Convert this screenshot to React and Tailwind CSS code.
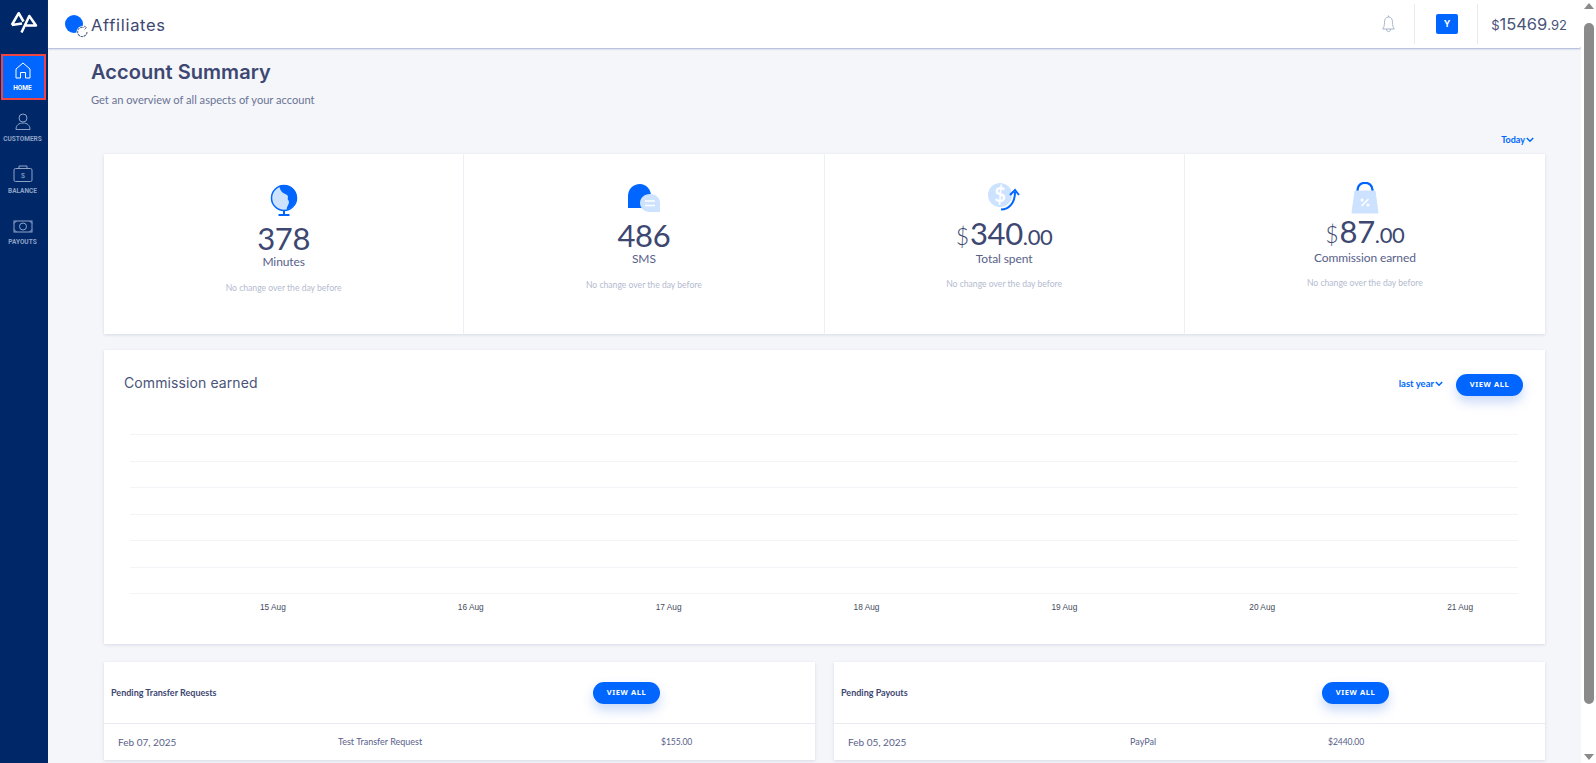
const body = { fontFamily: '"Lato", "Noto Sans", sans-serif' };
const Logo = () => (
  <svg width="28" height="23" viewBox="0 0 28 23" fill="none" stroke="white" strokeWidth="2.5">
    <path d="M1.8 14 L8.7 2.2 L13.5 10.5 M1.8 14 L12 12.5" strokeLinejoin="round" />
    <path d="M11.5 21.5 L19.3 5 L26 14.5 H15" strokeLinejoin="round" />
  </svg>
);
const AffIcon = () => (
  <svg width="24" height="24" viewBox="0 0 24 24" fill="none">
    <circle cx="9" cy="9" r="9" fill="#0066ff" />
    <circle cx="17.5" cy="17" r="6" fill="white" />
    <path d="M22 17 A4.7 4.7 0 1 1 19 12.5" stroke="#5a6a90" strokeWidth="1.1" strokeDasharray="2.5 0.7" />
    <path d="M19 11 L21.5 12.5 L19.5 14.5" stroke="#5a6a90" strokeWidth="0.9" />
  </svg>
);
const HomeI = () => (
  <svg width="16" height="17" viewBox="0 0 16 17" fill="none" stroke="white" strokeWidth="1">
    <path d="M1 7 L8 1 L15 7 V16 H10.5 V10.5 H5.5 V16 H1 Z" strokeLinejoin="round" />
  </svg>
);
const UserI = () => (
  <svg width="16" height="17" viewBox="0 0 16 17" fill="none" stroke="#8fa2c6" strokeWidth="1">
    <circle cx="8" cy="5" r="4" />
    <path d="M1 16.5 C1 12 4 10 8 10 C12 10 15 12 15 16.5 Z" />
  </svg>
);
const BagI = () => (
  <svg width="20" height="17" viewBox="0 0 20 17" fill="none" stroke="#8fa2c6" strokeWidth="1">
    <rect x="1" y="3.5" width="18" height="13" rx="1.5" />
    <path d="M6 3.5 V1 H14 V3.5" />
    <text x="10" y="13" fontSize="7" textAnchor="middle" fill="#8fa2c6" stroke="none" fontFamily="Liberation Sans, sans-serif">$</text>
  </svg>
);
const CashI = () => (
  <svg width="20" height="13" viewBox="0 0 20 13" fill="none" stroke="#8fa2c6" strokeWidth="1">
    <rect x="1" y="1" width="18" height="11" />
    <ellipse cx="10" cy="6.5" rx="3.5" ry="3.5" />
    <path d="M1 3.5 L3.5 1 M16.5 1 L19 3.5 M1 9.5 L3.5 12 M16.5 12 L19 9.5" />
  </svg>
);
const BellI = () => (
  <svg width="13" height="18" viewBox="0 0 13 18" fill="none" stroke="#a9b4c9" strokeWidth="1">
    <path d="M6.5 2 C3.5 2 2.5 4.5 2.5 7.5 C2.5 10.5 1.8 12.5 0.7 14 H12.3 C11.2 12.5 10.5 10.5 10.5 7.5 C10.5 4.5 9.5 2 6.5 2 Z" />
    <path d="M6.5 0.5 V2 M4.5 14 C4.5 17.5 8.5 17.5 8.5 14" />
  </svg>
);
const Chevron = () => (
  <svg width="8" height="6" viewBox="0 0 8 6" fill="none" stroke="#0066ff" strokeWidth="1.5"><path d="M0.8 1 L4 4.2 L7.2 1" /></svg>
);
const NavItem = ({ icon, label, cls }) => (
  <div className={`flex w-full flex-col items-center ${cls}`}>
    {icon}
    <span className="mt-[5px] text-[6.5px] leading-[8px] font-bold text-[#8fa2c6]" style={{ fontFamily: '"Roboto", sans-serif' }}>{label}</span>
  </div>
);
const Globe = () => (
  <svg width="28" height="32" viewBox="0 0 28 32">
    <circle cx="14" cy="14" r="12.5" fill="#cce2ff" stroke="#0066ff" strokeWidth="1.5" />
    <path d="M9 2 C16 -1 27 3 26.5 14 C26 20 22 24 17 25.5 C16 23 19 21 19 18 C19 16 17 16 18 13 C18 10 14 10 12 8 C10 6 10 4 9 2 Z" fill="#0066ff" />
    <path d="M14 26 V30 M8.5 31 H19.5" stroke="#0066ff" strokeWidth="2" />
  </svg>
);
const Sms = () => (
  <svg width="32" height="28" viewBox="0 0 32 28">
    <path d="M0 24 V12 C0 5 5 0 12 0 C18 0 23 5 23 12 V24 Z" fill="#0066ff" />
    <path d="M22 10 C28 10 32 14 32 19 V27 Q32 28 31 28 H22 C16 28 12 24 12 19 C12 14 16 10 22 10 Z" fill="#cce2ff" />
    <path d="M17 17 H27 M17 21.5 H27" stroke="white" strokeWidth="1.6" />
  </svg>
);
const Dollar = () => (
  <svg width="32" height="28" viewBox="0 0 32 28">
    <circle cx="12" cy="12" r="12" fill="#cce2ff" />
    <text x="12" y="19" textAnchor="middle" fontSize="20" fontWeight="700" fill="white" fontFamily="Lato, sans-serif">$</text>
    <path d="M13 26.5 C21 26.5 27 20 27 9" fill="none" stroke="#0066ff" strokeWidth="2" />
    <path d="M22 12 L27 7 L31 12" fill="none" stroke="#0066ff" strokeWidth="2" />
  </svg>
);
const Bag = () => (
  <svg width="28" height="32" viewBox="0 0 28 32">
    <path d="M6.5 9 V8 C6.5 -1.5 21.5 -1.5 21.5 8 V9" fill="none" stroke="#0066ff" strokeWidth="2.4" />
    <path d="M4 9 H24 L27 31 H1 Z" fill="#cce2ff" strokeLinejoin="round" stroke="#cce2ff" />
    <path d="M10.5 24 L17.5 17" stroke="white" strokeWidth="1.6" />
    <circle cx="11" cy="18" r="1.5" fill="white" /><circle cx="17" cy="23" r="1.5" fill="white" />
  </svg>
);
const Stat = ({ icon, pt, mt, num, cents, label, lt, nt, last }) => (
  <div className={`flex flex-col items-center ${pt} ${last ? '' : 'border-r border-[#eef0f5]'}`}>
    <div className="flex h-[32px] items-start justify-center">{icon}</div>
    <div className={`flex items-baseline leading-[28px] text-[#3d4771] ${mt}`}>
      {cents && <span className="mr-[1px] text-[23px] font-light">$</span>}
      <span className="text-[31px] tracking-[-0.4px]">{num}</span>
      {cents && <span className="text-[22px] tracking-[-0.3px]">.{cents}</span>}
    </div>
    <div className={`text-[12px] leading-[16px] tracking-[-0.1px] text-[#58618a] ${lt}`}>{label}</div>
    <div className={`text-[8.6px] leading-[12px] text-[#b4bbcf] ${nt}`}>No change over the day before</div>
  </div>
);
const Btn = ({ cls }) => (
  <div className={`flex h-[22px] w-[67px] items-center justify-center rounded-full bg-[#0066ff] text-[7.5px] font-bold tracking-[0.6px] text-white shadow-[0_6px_12px_rgba(0,80,220,0.22)] ${cls}`} style={{ fontFamily: '"Noto Sans", sans-serif' }}>VIEW ALL</div>
);
const Lower = ({ title, date, mid, amt, gap1, gap2, btn }) => (
  <div className="flex flex-col bg-white shadow-[0_1px_3px_rgba(60,70,120,0.15)]">
    <div className="relative flex h-[62px] items-center border-b border-[#e8eaf0] pl-[7px] text-[9px] font-bold text-[#3d4771]">
      <span>{title}</span>
      <Btn cls={`absolute top-[20px] ${btn}`} />
    </div>
    <div className="flex h-[36px] items-center pl-[14px] text-[#58618a]">
      <span className={`text-[10px] ${gap1}`}>{date}</span>
      <span className={`text-[9px] ${gap2}`}>{mid}</span>
      <span className="text-[8.6px] tracking-[-0.1px]">{amt}</span>
    </div>
  </div>
);
export default function App() {
  return (
    <div className="flex h-screen w-full overflow-hidden bg-[#f4f6fa]" style={body}>
      <aside className="flex w-[48px] shrink-0 flex-col items-center bg-[#002868] pr-[3px]">
        <div className="ml-[3px] mt-[11px] h-[23px]"><Logo /></div>
        <div className="ml-[1px] mt-[20px] flex h-[46px] w-[45px] flex-col items-center justify-center self-start border-2 border-[#ef4444] bg-[#0066ff] pr-[2px]">
          <HomeI />
          <span className="mt-[5px] text-[6.5px] leading-[8px] font-bold text-white" style={{ fontFamily: '"Roboto", sans-serif' }}>HOME</span>
        </div>
        <NavItem icon={<UserI />} label="CUSTOMERS" cls="mt-[13px]" />
        <NavItem icon={<BagI />} label="BALANCE" cls="mt-[22px]" />
        <NavItem icon={<CashI />} label="PAYOUTS" cls="mt-[25px]" />
      </aside>
      <main className="flex min-w-0 flex-1 flex-col">
        <header className="flex h-[48px] shrink-0 items-center rounded-br-[2px] bg-white pl-[17px] shadow-[0_1px_2px_rgba(70,90,160,0.45)]">
          <div className="mt-[6px] h-[24px] w-[24px]"><AffIcon /></div>
          <span className="ml-[2px] mt-[3px] text-[16.5px] tracking-[0.7px] text-[#3d4771]" style={{ fontFamily: '"Inter", sans-serif' }}>Affiliates</span>
          <div className="ml-auto flex h-[40px] items-center">
            <BellI />
            <div className="ml-[19px] h-[40px] w-px bg-[#e8eaf0]" />
            <div className="ml-[21px] flex h-[20px] w-[22px] items-center justify-center rounded-[2px] bg-[#0066ff] text-[9px] font-bold text-white" style={{ fontFamily: '"Inter", sans-serif' }}>Y</div>
            <div className="ml-[19px] h-[40px] w-px bg-[#e8eaf0]" />
            <div className="ml-[13px] mr-[14px] flex items-baseline text-[#4a5479]" style={{ fontFamily: '"Inter", sans-serif' }}>
              <span className="text-[13px]">$</span><span className="text-[16.5px]">15469</span><span className="text-[13px]">.92</span>
            </div>
          </div>
        </header>
        <div className="flex min-h-0 flex-1 flex-col pl-[43px]">
          <h1 className="mt-[12px] text-[20px] leading-[24px] font-semibold tracking-[0.05px] text-[#3d4771]" style={{ fontFamily: '"Inter", sans-serif' }}>Account Summary</h1>
          <p className="mt-[8px] text-[11.1px] leading-[16px] text-[#6b7394]">Get an overview of all aspects of your account</p>
          <div className="mr-[47px] mt-[26px] flex items-center justify-end gap-[1px] text-[9px] leading-[12px] font-bold text-[#0066ff]">Today<Chevron /></div>
          <div className="ml-[13px] mr-[36px] flex flex-col">
            <section className="mt-[8px] grid h-[180px] grid-cols-4 bg-white shadow-[0_1px_3px_rgba(60,70,120,0.15)]">
              <Stat icon={<Globe />} pt="pt-[30px]" mt="mt-[8px]" num="378" label="Minutes" lt="mt-[2px]" nt="mt-[12px]" />
              <Stat icon={<Sms />} pt="pt-[30px]" mt="mt-[5px]" num="486" label="SMS" lt="mt-[2px]" nt="mt-[12px]" />
              <Stat icon={<Dollar />} pt="pt-[29px]" mt="mt-[4px]" num="340" cents="00" label="Total spent" lt="mt-[0px]" nt="mt-[11px]" />
              <Stat icon={<Bag />} pt="pt-[28px]" mt="mt-[3px]" num="87" cents="00" label="Commission earned" lt="mt-[1px]" nt="mt-[11px]" last />
            </section>
            <section className="mt-[16px] flex h-[294px] flex-col bg-white px-[20px] shadow-[0_1px_3px_rgba(60,70,120,0.15)]">
              <div className="flex h-[60px] items-center">
                <h2 className="mt-[4px] text-[14px] tracking-[0.1px] text-[#4a5479]" style={{ fontFamily: '"Inter", sans-serif' }}>Commission earned</h2>
                <div className="ml-auto mt-[8px] flex items-center gap-[1px] text-[9.5px] font-bold text-[#0066ff]">last year<Chevron /></div>
                <Btn cls="ml-[13px] mr-[2px] mt-[9px]" />
              </div>
              <div className="ml-[6px] mr-[7px] mt-[24px] flex flex-col gap-[25.5px]">
                {[0, 1, 2, 3, 4, 5, 6].map((i) => <div key={i} className="h-px bg-[#f3f4f7]" />)}
              </div>
              <div className="ml-[136px] mr-[52px] mt-[8px] flex justify-between text-[8.3px] leading-[10px] text-[#444c5e]" style={{ fontFamily: '"Liberation Sans", sans-serif' }}>
                {['15 Aug', '16 Aug', '17 Aug', '18 Aug', '19 Aug', '20 Aug', '21 Aug'].map((d) => <span key={d}>{d}</span>)}
              </div>
            </section>
            <section className="mt-[18px] grid grid-cols-2 gap-[19px]">
              <Lower title="Pending Transfer Requests" date="Feb 07, 2025" mid="Test Transfer Request" amt="$155.00" gap1="w-[220px]" gap2="w-[323px]" btn="left-[489px]" />
              <Lower title="Pending Payouts" date="Feb 05, 2025" mid="PayPal" amt="$2440.00" gap1="w-[282px]" gap2="w-[198px]" btn="left-[488px]" />
            </section>
          </div>
        </div>
      </main>
      <div className="flex w-[15px] shrink-0 flex-col items-center bg-white">
        <div className="mt-[3px] h-0 w-0 border-x-[5px] border-b-[6px] border-x-transparent border-b-[#8a8a8a]" />
        <div className="mt-[14px] h-[681px] w-[10px] rounded-[5px] bg-[#8a8a8a]" />
        <div className="mb-[3px] mt-auto h-0 w-0 border-x-[5px] border-t-[6px] border-x-transparent border-t-[#8a8a8a]" />
      </div>
    </div>
  );
}
